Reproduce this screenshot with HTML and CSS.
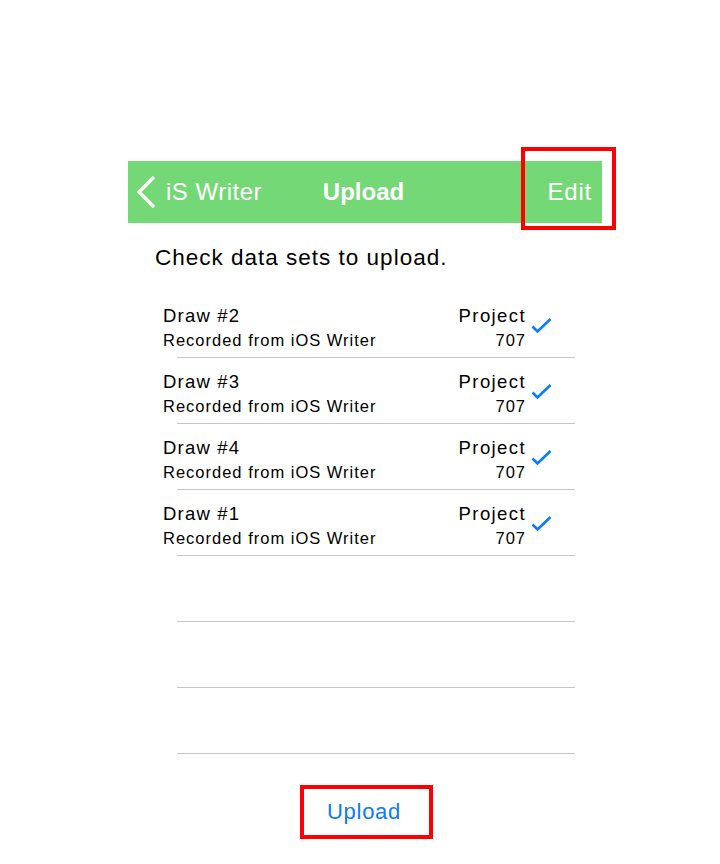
FILE: index.html
```html
<!DOCTYPE html>
<html>
<head>
<meta charset="utf-8">
<link rel="stylesheet" href="styles.css">
</head>
<body>
<div class="screen">
  <div class="nav">
    <div class="nav-left">
      <svg class="chev" width="20" height="34" viewBox="0 0 20 34"><path d="M18 2 L3 17 L18 32" fill="none" stroke="#fff" stroke-width="3.2" stroke-linecap="butt" stroke-linejoin="miter"/></svg>
      <span>iS Writer</span>
    </div>
    <div class="nav-title">Upload</div>
    <div class="nav-right"><span class="edit">Edit</span></div>
  </div>

  <p class="intro">Check data sets to upload.</p>

  <div class="list">
    <div class="row">
      <div class="left"><div class="name">Draw #2</div><div class="sub">Recorded from iOS Writer</div></div>
      <div class="right"><div class="name">Project</div><div class="sub">707</div></div>
      <svg class="check" width="22" height="17" viewBox="0 0 22 17"><path d="M1.5 9.5 L6.5 14.5 L19.5 2" fill="none" stroke="#0a7aff" stroke-width="2.6"/></svg>
    </div>
    <div class="sep"></div>
    <div class="row">
      <div class="left"><div class="name">Draw #3</div><div class="sub">Recorded from iOS Writer</div></div>
      <div class="right"><div class="name">Project</div><div class="sub">707</div></div>
      <svg class="check" width="22" height="17" viewBox="0 0 22 17"><path d="M1.5 9.5 L6.5 14.5 L19.5 2" fill="none" stroke="#0a7aff" stroke-width="2.6"/></svg>
    </div>
    <div class="sep"></div>
    <div class="row">
      <div class="left"><div class="name">Draw #4</div><div class="sub">Recorded from iOS Writer</div></div>
      <div class="right"><div class="name">Project</div><div class="sub">707</div></div>
      <svg class="check" width="22" height="17" viewBox="0 0 22 17"><path d="M1.5 9.5 L6.5 14.5 L19.5 2" fill="none" stroke="#0a7aff" stroke-width="2.6"/></svg>
    </div>
    <div class="sep"></div>
    <div class="row">
      <div class="left"><div class="name">Draw #1</div><div class="sub">Recorded from iOS Writer</div></div>
      <div class="right"><div class="name">Project</div><div class="sub">707</div></div>
      <svg class="check" width="22" height="17" viewBox="0 0 22 17"><path d="M1.5 9.5 L6.5 14.5 L19.5 2" fill="none" stroke="#0a7aff" stroke-width="2.6"/></svg>
    </div>
    <div class="sep"></div>
    <div class="row empty"></div>
    <div class="sep"></div>
    <div class="row empty"></div>
    <div class="sep"></div>
    <div class="row empty"></div>
    <div class="sep"></div>
  </div>

  <div class="actions">
    <button class="upload">Upload</button>
  </div>
</div>
</body>
</html>
```
FILE: styles.css
```css
html, body {
  margin: 0;
  padding: 0;
  background: #fff;
}
body {
  font-family: "Liberation Sans", Arial, Helvetica, sans-serif;
  color: #000;
}
.screen {
  margin-left: 128px;
  width: 474px;
  padding-top: 161px;
}
.nav {
  position: relative;
  height: 62px;
  background: #75d877;
  display: grid;
  grid-template-columns: 1fr auto 1fr;
  align-items: center;
  color: #fff;
  font-size: 24px;
}
.nav::after {
  content: "";
  position: absolute;
  right: -14px;
  top: -14px;
  width: 95px;
  height: 83px;
  box-sizing: border-box;
  border: 4px solid #ff0000;
}
.nav-left {
  display: flex;
  align-items: center;
  padding-left: 8px;
  letter-spacing: 0.5px;
}
.chev {
  display: block;
  margin-right: 10px;
}
.nav-title {
  font-weight: bold;
  padding-right: 3px;
}
.nav-right {
  display: flex;
  justify-content: flex-end;
  padding-right: 10px;
  letter-spacing: 0.8px;
}
.intro {
  margin: 22px 0 21px 27px;
  font-size: 22.5px;
  line-height: 26px;
  letter-spacing: 1px;
}
.list {
  margin-left: 35px;
  width: 412px;
}
.row {
  display: flex;
  height: 65px;
  box-sizing: border-box;
  padding-top: 13px;
}
.name {
  font-size: 18.5px;
  line-height: 22px;
  letter-spacing: 1.2px;
}
.sub {
  font-size: 16.5px;
  line-height: 22px;
  margin-top: 2px;
  letter-spacing: 1px;
}
.right .name,
.right .sub {
  margin-right: -1px;
}
.right .name {
  letter-spacing: 1.4px;
}
.right {
  margin-left: auto;
  text-align: right;
}
.check {
  display: block;
  margin: 12px 22px 0 6px;
}
.sep {
  margin-left: 14px;
  height: 1px;
  background: #c8c7cc;
}
.actions {
  display: flex;
  justify-content: center;
  padding-left: 3px;
  margin-top: 31px;
}
.upload {
  width: 133px;
  height: 54px;
  box-sizing: border-box;
  border: 4px solid #ff0000;
  background: #fff;
  color: #0a7aff;
  font-family: "Liberation Sans", Arial, Helvetica, sans-serif;
  font-size: 22px;
  line-height: 26px;
  letter-spacing: 0.7px;
  padding: 0 5px 0 0;
}
```
